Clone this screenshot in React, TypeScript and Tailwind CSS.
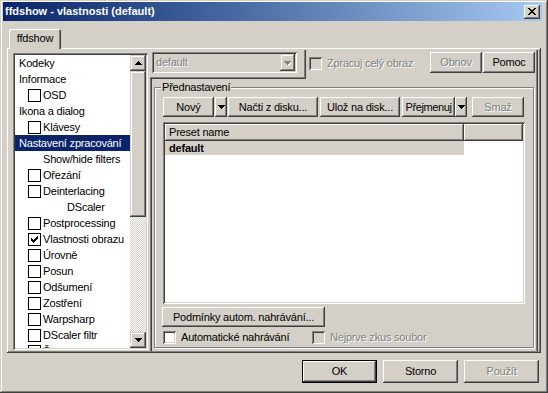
import React from "react";

// win2000 3d edges
const RAISED =
  "shadow-[inset_-1px_-1px_0_#404040,inset_1px_1px_0_#fff,inset_-2px_-2px_0_#808080,inset_2px_2px_0_#d4d0c8]";
const RAISED_SB =
  "shadow-[inset_-1px_-1px_0_#404040,inset_1px_1px_0_#d4d0c8,inset_-2px_-2px_0_#808080,inset_2px_2px_0_#fff]";
const SUNKEN =
  "shadow-[inset_1px_1px_0_#808080,inset_-1px_-1px_0_#fff,inset_2px_2px_0_#404040,inset_-2px_-2px_0_#d4d0c8]";
const DISABLED = "text-[#808080] [text-shadow:1px_1px_0_#fff]";

type Item = { label: string; indent: string; check?: boolean; selected?: boolean };

const TREE: Item[] = [
  { label: "Kodeky", indent: "pl-[4px]" },
  { label: "Informace", indent: "pl-[4px]" },
  { label: "OSD", indent: "pl-[13px]", check: false },
  { label: "Ikona a dialog", indent: "pl-[4px]" },
  { label: "Klávesy", indent: "pl-[13px]", check: false },
  { label: "Nastavení zpracování", indent: "pl-[4px]", selected: true },
  { label: "Show/hide filters", indent: "pl-[28px]" },
  { label: "Ořezání", indent: "pl-[13px]", check: false },
  { label: "Deinterlacing", indent: "pl-[13px]", check: false },
  { label: "DScaler", indent: "pl-[52px]" },
  { label: "Postprocessing", indent: "pl-[13px]", check: false },
  { label: "Vlastnosti obrazu", indent: "pl-[13px]", check: true },
  { label: "Úrovně", indent: "pl-[13px]", check: false },
  { label: "Posun", indent: "pl-[13px]", check: false },
  { label: "Odšumení", indent: "pl-[13px]", check: false },
  { label: "Zostření", indent: "pl-[13px]", check: false },
  { label: "Warpsharp", indent: "pl-[13px]", check: false },
  { label: "DScaler filtr", indent: "pl-[13px]", check: false },
  { label: "Šum", indent: "pl-[13px]", check: false },
];

const ArrowDown = ({ disabled }: { disabled?: boolean }) => (
  <svg width="7" height="4" viewBox="0 0 7 4" shapeRendering="crispEdges" className={disabled ? "drop-shadow-[1px_1px_0_#fff]" : ""}>
    <path d="M0 0h7v1h-1v1h-1v1h-1v1h-1v-1h-1v-1h-1v-1h-1z" fill={disabled ? "#808080" : "#000"} />
  </svg>
);

const ArrowUp = () => (
  <svg width="7" height="4" viewBox="0 0 7 4" shapeRendering="crispEdges">
    <path d="M3 0h1v1h1v1h1v1h1v1h-7v-1h1v-1h1v-1h1z" fill="#000" />
  </svg>
);

const CheckMark = () => (
  <svg width="7" height="7" viewBox="0 0 7 7" shapeRendering="crispEdges">
    <path d="M0 2h1v1h1v1h1v-1h1v-1h1v-1h1v-1h1v3h-1v1h-1v1h-1v1h-1v1h-1v-1h-1v-1h-1v-1h-1z" fill="#000" />
  </svg>
);

const CloseGlyph = () => (
  <svg width="8" height="7" viewBox="0 0 8 7" shapeRendering="crispEdges">
    <path
      d="M0 0h2v1h-2zM6 0h2v1h-2zM1 1h2v1h-2zM5 1h2v1h-2zM2 2h4v1h-4zM3 3h2v1h-2zM2 4h4v1h-4zM1 5h2v1h-2zM5 5h2v1h-2zM0 6h2v1h-2zM6 6h2v1h-2z"
      fill="#000"
    />
  </svg>
);

interface BtnProps {
  label?: React.ReactNode;
  size: string;
  disabled?: boolean;
  isDefault?: boolean;
}

const Button = ({ label, size, disabled, isDefault }: BtnProps) => (
  <div
    className={`${size} shrink-0 flex items-center justify-center whitespace-nowrap bg-[#d4d0c8] ${RAISED} ${
      isDefault ? "border border-black" : ""
    } ${disabled ? DISABLED : ""}`}
  >
    {label}
  </div>
);

const CheckBox = ({ label, disabled }: { label: string; disabled?: boolean }) => (
  <div className="flex items-center h-[13px]">
    <div className={`w-[13px] h-[13px] ${SUNKEN} ${disabled ? "bg-[#d4d0c8]" : "bg-white"}`} />
    <span className={`ml-[5px] leading-[13px] ${disabled ? DISABLED : ""}`}>{label}</span>
  </div>
);

const TreeList = () => (
  <div className={`mt-[3px] w-[135px] h-[297px] bg-white p-[2px] flex ${SUNKEN}`}>
    <div className="w-[115px] h-[293px] overflow-hidden">
      {TREE.map((item) => (
        <div
          key={item.label}
          className={`h-[16px] flex items-center whitespace-nowrap ${item.indent} ${
            item.selected ? "bg-[#0a246a] text-white" : ""
          }`}
        >
          {item.check !== undefined && (
            <div className="w-[13px] h-[13px] border border-black bg-white mr-[2px] flex items-center justify-center">
              {item.check && <CheckMark />}
            </div>
          )}
          <span className="leading-[16px]">{item.label}</span>
        </div>
      ))}
    </div>
    {/* scrollbar */}
    <div className="w-[16px] h-[293px] flex flex-col">
      <div className={`h-[16px] flex items-center justify-center bg-[#d4d0c8] ${RAISED_SB}`}>
        <ArrowUp />
      </div>
      <div className={`h-[146px] bg-[#d4d0c8] ${RAISED_SB}`} />
      <div className="flex-1 bg-[repeating-conic-gradient(#fff_0_25%,#d4d0c8_0_50%)] bg-[length:2px_2px]" />
      <div className={`h-[16px] flex items-center justify-center bg-[#d4d0c8] ${RAISED_SB}`}>
        <ArrowDown />
      </div>
    </div>
  </div>
);

const PresetList = () => (
  <div className={`mt-[5px] w-[362px] h-[182px] bg-white p-[2px] ${SUNKEN}`}>
    <div className="flex h-[17px]">
      <div className={`w-[299px] bg-[#d4d0c8] pl-[4px] leading-[17px] ${RAISED}`}>Preset name</div>
      <div className={`flex-1 bg-[#d4d0c8] ${RAISED}`} />
    </div>
    <div className="w-[299px] h-[14px] bg-[#d4d0c8] pl-[4px] leading-[14px] font-bold">default</div>
  </div>
);

const PresetGroup = () => (
  <div className="relative ml-[4px] mt-[8px] w-[380px] h-[261px] border border-[#808080] shadow-[inset_1px_1px_0_#fff,1px_1px_0_#fff] pl-[8px] pt-[9px]">
    <span className="absolute -top-[7px] left-[6px] px-[1px] bg-[#d4d0c8] leading-[13px]">Přednastavení</span>
    <div className="flex items-center">
      <Button label="Nový" size="w-[51px] h-[20px]" />
      <div className="ml-[1px]">
        <Button label={<ArrowDown />} size="w-[12px] h-[20px]" />
      </div>
      <div className="ml-[1px]">
        <Button label="Načti z disku..." size="w-[90px] h-[20px]" />
      </div>
      <div className="ml-[2px]">
        <Button label="Ulož na disk..." size="w-[80px] h-[20px]" />
      </div>
      <div className="ml-[2px] tracking-[-0.4px]">
        <Button label="Přejmenuj" size="w-[53px] h-[20px]" />
      </div>
      <Button label={<ArrowDown />} size="w-[12px] h-[20px]" />
      <div className="ml-[5px]">
        <Button label="Smaž" size="w-[52px] h-[20px]" disabled />
      </div>
    </div>
    <PresetList />
    <div className="mt-[3px] -ml-[1px]">
      <Button label="Podmínky autom. nahrávání..." size="w-[163px] h-[20px]" />
    </div>
    <div className="mt-[4px] flex">
      <div className="w-[149px]">
        <CheckBox label="Automatické nahrávání" />
      </div>
      <CheckBox label="Nejprve zkus soubor" disabled />
    </div>
  </div>
);

const RightPanel = () => (
  <div className="ml-[2px] w-[388px] h-[301px] flex flex-col shadow-[inset_-1px_0_0_#404040,inset_-2px_0_0_#808080]">
    <div className="flex items-start pr-[3px]">
      <div className="w-[156px] h-[29px] pl-[2px] pt-[2px] shadow-[inset_-1px_-1px_0_#404040,inset_-2px_-2px_0_#808080]">
        <div className={`w-[145px] h-[21px] bg-[#d4d0c8] p-[2px] flex items-center ${SUNKEN}`}>
          <span className={`flex-1 pl-[2px] ${DISABLED}`}>default</span>
          <div className={`w-[15px] h-[17px] flex items-center justify-center bg-[#d4d0c8] ${RAISED_SB}`}>
            <ArrowDown disabled />
          </div>
        </div>
      </div>
      <div className="ml-[3px] mt-[7px]">
        <CheckBox label="Zpracuj celý obraz" disabled />
      </div>
      <div className="ml-auto mt-[2px] flex gap-[1px]">
        <Button label="Obnov" size="w-[52px] h-[21px]" disabled />
        <Button label="Pomoc" size="w-[52px] h-[21px]" />
      </div>
    </div>
    <div className="flex-1 shadow-[inset_1px_0_0_#808080,inset_2px_0_0_#404040]">
      <PresetGroup />
    </div>
  </div>
);

export default function App() {
  return (
    <div
      className={`w-[548px] h-[393px] bg-[#d4d0c8] overflow-hidden text-[11px] tracking-[-0.2px] text-black font-['Liberation_Sans',Arial,sans-serif] shadow-[inset_-1px_-1px_0_#404040,inset_1px_1px_0_#d4d0c8,inset_-2px_-2px_0_#808080,inset_2px_2px_0_#fff]`}
    >
      {/* title bar */}
      <div className="ml-[3px] pt-[2px]">
        <div className="w-[539px] h-[19px] bg-linear-to-r from-[#0a246a] to-[#a6caf0] flex items-center justify-between pl-[2px] pr-[2px]">
          <span className="text-white font-bold leading-[19px] tracking-normal">ffdshow - vlastnosti (default)</span>
          <div className={`w-[16px] h-[14px] bg-[#d4d0c8] flex items-center justify-center ${RAISED}`}>
            <CloseGlyph />
          </div>
        </div>
      </div>

      {/* tabs */}
      <div className="ml-[7px] mt-[8px] w-[534px]">
        <div className="flex pl-[2px]">
          <div className="relative z-10 -mb-[1px] w-[52px] h-[20px] bg-[#d4d0c8] rounded-t-[2px] shadow-[inset_1px_1px_0_#fff,inset_-1px_0_0_#404040,inset_-2px_0_0_#808080] flex justify-center pt-[3px] leading-[13px]">
            ffdshow
          </div>
        </div>
        <div className={`w-[534px] h-[305px] flex pl-[6px] pt-[2px] ${RAISED}`}>
          <TreeList />
          <RightPanel />
        </div>
      </div>

      {/* dialog buttons */}
      <div className="mt-[7px] flex justify-end gap-[6px] pr-[9px]">
        <Button label="OK" size="w-[75px] h-[23px]" isDefault />
        <Button label="Storno" size="w-[75px] h-[23px]" />
        <Button label="Použít" size="w-[75px] h-[23px]" disabled />
      </div>
    </div>
  );
}
